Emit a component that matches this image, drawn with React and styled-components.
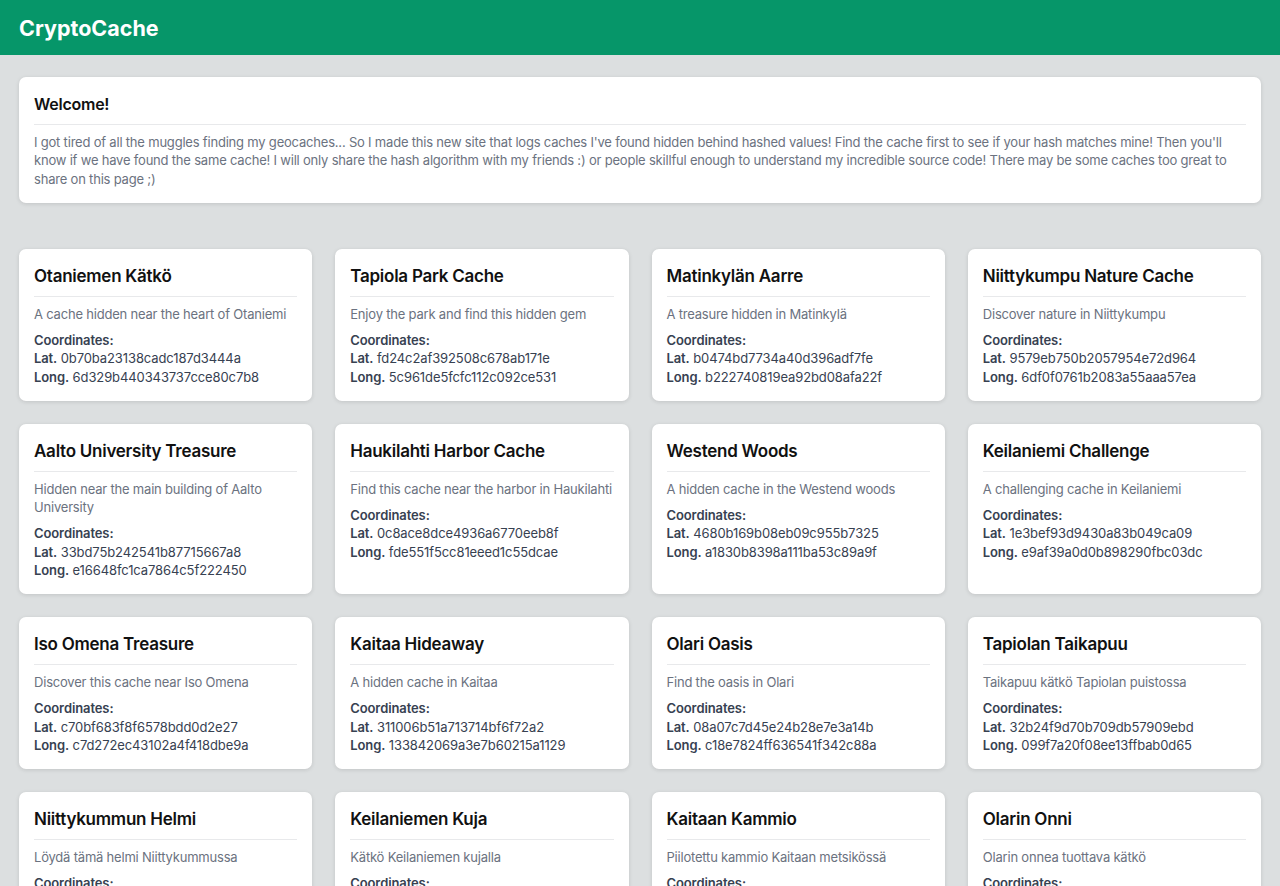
import styled, { createGlobalStyle } from 'styled-components'

const Global = createGlobalStyle`
  body {
    margin: 0;
    background: #dcdfe0;
    font-family: Inter, "Noto Sans", "Liberation Sans", sans-serif;
  }
  * { box-sizing: border-box; }
`

const Header = styled.header`
  height: 55px;
  background: #069669;
  display: flex;
  align-items: center;
  padding: 0 19px;
`
const Brand = styled.h1`
  margin: 0;
  color: #fff;
  font-size: 21.5px;
  font-weight: 700;
`
const Main = styled.main`
  padding: 22px 19px 40px;
`
const Card = styled.div`
  background: #fff;
  border-radius: 7px;
  box-shadow: 0 1px 4px rgba(0, 0, 0, 0.12);
  padding: 15px;
`
const Title = styled.h2`
  margin: 0;
  font-size: ${p => (p.$small ? '16px' : '17px')};
  line-height: 24px;
  font-weight: 600;
  letter-spacing: -0.25px;
  color: #111;
  padding-bottom: 8px;
  border-bottom: 1px solid #e8e9eb;
`
const Text = styled.p`
  margin: 8px 0 0;
  font-size: 13px;
  line-height: 18.25px;
  letter-spacing: -0.2px;
  color: #6b7280;
`
const Grid = styled.div`
  margin-top: 46px;
  display: grid;
  grid-template-columns: repeat(4, 1fr);
  gap: 23px 23px;
`
const Coords = styled.div`
  margin-top: 8px;
  font-size: 13px;
  line-height: 18.25px;
  letter-spacing: -0.1px;
  color: #374151;
`
const Label = styled.b`
  font-weight: 600;
`

const caches = [
  ['Otaniemen Kätkö', 'A cache hidden near the heart of Otaniemi', '0b70ba23138cadc187d3444a', '6d329b440343737cce80c7b8'],
  ['Tapiola Park Cache', 'Enjoy the park and find this hidden gem', 'fd24c2af392508c678ab171e', '5c961de5fcfc112c092ce531'],
  ['Matinkylän Aarre', 'A treasure hidden in Matinkylä', 'b0474bd7734a40d396adf7fe', 'b222740819ea92bd08afa22f'],
  ['Niittykumpu Nature Cache', 'Discover nature in Niittykumpu', '9579eb750b2057954e72d964', '6df0f0761b2083a55aaa57ea'],
  ['Aalto University Treasure', 'Hidden near the main building of Aalto University', '33bd75b242541b87715667a8', 'e16648fc1ca7864c5f222450'],
  ['Haukilahti Harbor Cache', 'Find this cache near the harbor in Haukilahti', '0c8ace8dce4936a6770eeb8f', 'fde551f5cc81eeed1c55dcae'],
  ['Westend Woods', 'A hidden cache in the Westend woods', '4680b169b08eb09c955b7325', 'a1830b8398a111ba53c89a9f'],
  ['Keilaniemi Challenge', 'A challenging cache in Keilaniemi', '1e3bef93d9430a83b049ca09', 'e9af39a0d0b898290fbc03dc'],
  ['Iso Omena Treasure', 'Discover this cache near Iso Omena', 'c70bf683f8f6578bdd0d2e27', 'c7d272ec43102a4f418dbe9a'],
  ['Kaitaa Hideaway', 'A hidden cache in Kaitaa', '311006b51a713714bf6f72a2', '133842069a3e7b60215a1129'],
  ['Olari Oasis', 'Find the oasis in Olari', '08a07c7d45e24b28e7e3a14b', 'c18e7824ff636541f342c88a'],
  ['Tapiolan Taikapuu', 'Taikapuu kätkö Tapiolan puistossa', '32b24f9d70b709db57909ebd', '099f7a20f08ee13ffbab0d65'],
  ['Niittykummun Helmi', 'Löydä tämä helmi Niittykummussa', '5a1e0c9d3f7b2e8a64c19d07', '8e4f21b6a09c73d5e1f84b2c'],
  ['Keilaniemen Kuja', 'Kätkö Keilaniemen kujalla', 'd17c3a9e5b0824f6c3e9a1b5', '4b9e06f2d8a17c35e0b4f9d2'],
  ['Kaitaan Kammio', 'Piilotettu kammio Kaitaan metsikössä', '7f2d9b4e1a0c63e85b7d2f19', 'a3c85e0f7b29d14c6e8a3b07'],
  ['Olarin Onni', 'Olarin onnea tuottava kätkö', 'e6b03a7d9c15f24b8a0e5d63', '2c7f4e9b1d0a86f3c5e2b8a4'],
]

export default function App() {
  return (
    <>
      <Global />
      <Header>
        <Brand>CryptoCache</Brand>
      </Header>
      <Main>
        <Card>
          <Title $small>Welcome!</Title>
          <Text>
            I got tired of all the muggles finding my geocaches... So I made this new site that logs caches I've found hidden behind hashed values! Find the cache first to see if your hash matches mine! Then you'll know if we have found the same cache! I will only share the hash algorithm with my friends :) or people skillful enough to understand my incredible source code! There may be some caches too great to share on this page ;)
          </Text>
        </Card>
        <Grid>
          {caches.map(([name, desc, lat, lng]) => (
            <Card key={name}>
              <Title>{name}</Title>
              <Text>{desc}</Text>
              <Coords>
                <Label>Coordinates:</Label>
                <br />
                <Label>Lat.</Label> {lat}
                <br />
                <Label>Long.</Label> {lng}
              </Coords>
            </Card>
          ))}
        </Grid>
      </Main>
    </>
  )
}
